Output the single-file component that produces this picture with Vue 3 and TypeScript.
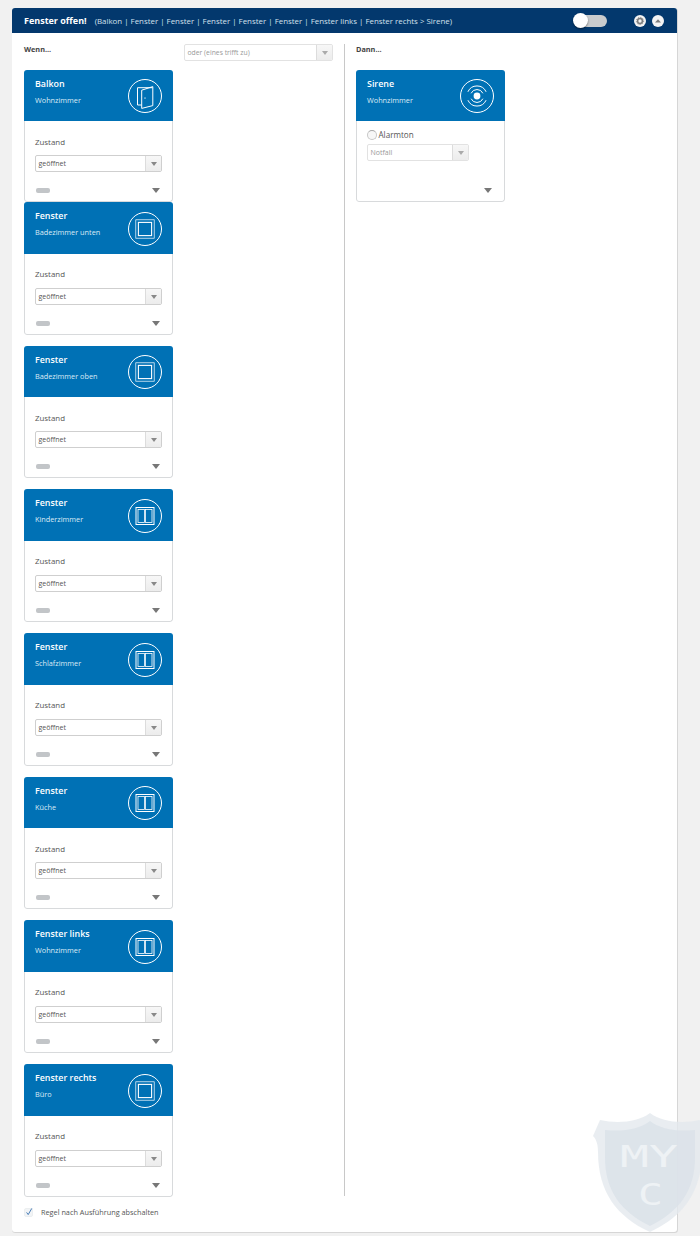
<script setup lang="ts">
type CardIcon = "door" | "single" | "double";

const conditions: { title: string; room: string; icon: CardIcon }[] = [
    { title: "Balkon", room: "Wohnzimmer", icon: "door" },
    { title: "Fenster", room: "Badezimmer unten", icon: "single" },
    { title: "Fenster", room: "Badezimmer oben", icon: "single" },
    { title: "Fenster", room: "Kinderzimmer", icon: "double" },
    { title: "Fenster", room: "Schlafzimmer", icon: "double" },
    { title: "Fenster", room: "Küche", icon: "double" },
    { title: "Fenster links", room: "Wohnzimmer", icon: "double" },
    { title: "Fenster rechts", room: "Büro", icon: "single" },
];
</script>

<template>
    <div class="page">
        <section class="panel">
            <header class="panel__head">
                <strong class="panel__title">Fenster offen!</strong>
                <span class="panel__summary">(Balkon | Fenster | Fenster | Fenster | Fenster | Fenster | Fenster links | Fenster rechts &gt; Sirene)</span>
                <span class="toggle"><span class="toggle__knob"></span></span>
                <span class="round-btn round-btn--gear">
                    <svg viewBox="0 0 12 12" width="12" height="12">
                        <circle cx="6" cy="6" r="6" fill="#f4f4f4" />
                        <circle cx="6" cy="6" r="2.4" fill="none" stroke="#7d7d7d" stroke-width="1.5" />
                        <circle cx="6" cy="6" r="3.6" fill="none" stroke="#7d7d7d" stroke-width="0.9" stroke-dasharray="1.2 1.2" />
                    </svg>
                </span>
                <span class="round-btn">
                    <svg viewBox="0 0 12 12" width="12" height="12">
                        <circle cx="6" cy="6" r="6" fill="#f4f4f4" />
                        <path d="M3 7.6 6 4.2l3 3.4z" fill="#7d7d7d" />
                    </svg>
                </span>
            </header>

            <div class="panel__body">
                <div class="rule">
                    <div class="rule__when">
                        <div class="rule__top">
                            <div class="rule__label">Wenn...</div>
                            <div class="select select--muted select--mode">
                                <span class="select__value">oder (eines trifft zu)</span>
                                <span class="select__arrow"></span>
                            </div>
                        </div>
                        <article v-for="(card, i) in conditions" :key="i" class="card" :class="{ 'card--tight': i === 0 }">
                            <div class="card__head">
                                <div class="card__names">
                                    <div class="card__title">{{ card.title }}</div>
                                    <div class="card__room">{{ card.room }}</div>
                                </div>
                                <svg class="card__icon" viewBox="0 0 36 36" width="36" height="36" fill="none" stroke="#fff">
                                    <circle cx="18" cy="18" r="16.5" stroke-width="1" />
                                    <template v-if="card.icon === 'door'">
                                        <path d="M14.5 27H10.5V9.7H25.5" stroke-width="1" />
                                        <path d="M14.7 12.2 25.8 8.6V27.6L14.7 30.4z" stroke-width="1" />
                                        <path d="M18 19.4v1.4" stroke-width="0.9" />
                                    </template>
                                    <template v-else-if="card.icon === 'single'">
                                        <rect x="8.8" y="8.8" width="18.4" height="18.4" stroke-width="0.7" />
                                        <rect x="11.4" y="11.4" width="13.2" height="13.2" stroke-width="1.1" />
                                    </template>
                                    <template v-else>
                                        <rect x="9" y="9.5" width="18" height="17" stroke-width="1" />
                                        <rect x="11" y="11.5" width="6.5" height="13" stroke-width="0.8" />
                                        <rect x="18.5" y="11.5" width="6.5" height="13" stroke-width="0.8" />
                                    </template>
                                </svg>
                            </div>
                            <div class="card__body">
                                <div class="card__field">Zustand</div>
                                <div class="select">
                                    <span class="select__value">geöffnet</span>
                                    <span class="select__arrow"></span>
                                </div>
                                <div class="card__foot">
                                    <span class="card__pill"></span>
                                    <span class="card__more"></span>
                                </div>
                            </div>
                        </article>
                    </div>

                    <div class="rule__then">
                        <div class="rule__label rule__label--then">Dann...</div>
                        <article class="card">
                            <div class="card__head">
                                <div class="card__names">
                                    <div class="card__title">Sirene</div>
                                    <div class="card__room">Wohnzimmer</div>
                                </div>
                                <svg class="card__icon" viewBox="0 0 36 36" width="36" height="36" fill="none" stroke="#fff">
                                    <circle cx="18" cy="18" r="16.5" stroke-width="1" />
                                    <circle cx="18" cy="18" r="3.4" fill="#fff" stroke="none" />
                                    <g stroke-width="1">
                                        <path d="M12.1 15.3a6.5 6.5 0 0 1 11.8 0M12.1 20.7a6.5 6.5 0 0 0 11.8 0" />
                                        <path d="M8.9 13.8a10 10 0 0 1 18.2 0M8.9 22.2a10 10 0 0 0 18.2 0" />
                                    </g>
                                </svg>
                            </div>
                            <div class="card__body card__body--action">
                                <label class="radio"><span class="radio__dot"></span>Alarmton</label>
                                <div class="select select--muted select--short">
                                    <span class="select__value">Notfall</span>
                                    <span class="select__arrow"></span>
                                </div>
                                <div class="card__foot card__foot--end">
                                    <span class="card__more"></span>
                                </div>
                            </div>
                        </article>
                    </div>
                </div>

                <label class="disable-after">
                    <svg class="disable-after__box" viewBox="0 0 10 10" width="10" height="10">
                        <rect x="0.5" y="1.5" width="8" height="8" rx="1.5" fill="#f2f4f6" stroke="#e4e7ea" stroke-width="0.6" />
                        <path d="M2.6 5.4 4.2 7.6 7.8 1.4" fill="none" stroke="#4b7fb8" stroke-width="1" />
                    </svg>
                    Regel nach Ausführung abschalten
                </label>
            </div>
        </section>

        <svg class="watermark" viewBox="0 0 108 122" width="108" height="122" aria-hidden="true">
            <path class="watermark__rim" d="M0 24 7 8C25 12 45 10 57 1 69 10 89 12 107 8L114 24C110 28 109 34 109 40 109 80 90 105 57 120 24 105 5 80 5 40 5 34 4 28 0 24z" />
            <path class="watermark__core" d="M12 18C30 20 47 17 57 9 67 17 84 20 102 18V45C102 80 85 100 57 114 29 100 12 80 12 45z" />
            <text x="27" y="55" textLength="58" lengthAdjust="spacingAndGlyphs" class="watermark__text">MY</text>
            <text x="45" y="93" textLength="25" lengthAdjust="spacingAndGlyphs" class="watermark__text">C</text>
        </svg>
    </div>
</template>

<style scoped>
.page {
    position: relative;
    height: 1236px;
    overflow: hidden;
    box-sizing: border-box;
    padding: 8px 23.5px 4px 12px;
    font-family: "Open Sans", "Liberation Sans", sans-serif;
    color: #555;
}

.panel {
    display: flex;
    flex-direction: column;
    height: 100%;
    box-sizing: border-box;
    border-radius: 3px;
    background: #fff;
    box-shadow: 0.5px 0.5px 0 0.5px #d6d6d6;
}

.panel__head {
    display: flex;
    flex: none;
    align-items: center;
    height: 25px;
    padding: 0 13px 0 12px;
    border-radius: 3px 3px 0 0;
    background: #03386d;
    color: #fff;
}

.panel__title {
    font-size: 9px;
    font-weight: 700;
    white-space: nowrap;
}

.panel__summary {
    margin-left: 8px;
    font-size: 7.9px;
    color: #d3e0ec;
    white-space: nowrap;
}

.toggle {
    position: relative;
    width: 33px;
    height: 12px;
    margin-left: auto;
    border-radius: 6px;
    background: #c9cbcd;
}

.toggle__knob {
    position: absolute;
    top: -1.5px;
    left: -1px;
    width: 15px;
    height: 15px;
    border-radius: 50%;
    background: #fff;
    box-shadow: 0 1px 2px rgba(0, 0, 0, 0.45);
}

.round-btn {
    display: flex;
    width: 12px;
    height: 12px;
    margin-left: 6px;
}

.round-btn--gear {
    margin-left: 27px;
}

.panel__body {
    display: flex;
    flex: 1;
    flex-direction: column;
    padding: 11px 12px 0;
}

.rule {
    display: flex;
}

.rule__when {
    box-sizing: border-box;
    width: 321px;
    height: 1152px;
    padding-right: 11px;
    border-right: 1px solid #c8c8c8;
}

.rule__top {
    display: flex;
    justify-content: space-between;
    height: 25.5px;
}

.rule__label {
    font-size: 7.3px;
    font-weight: 700;
    line-height: 11px;
    color: #444;
}

.rule__label--then {
    height: 25.5px;
}

.rule__then {
    padding-left: 11px;
}

.card {
    display: flex;
    flex-direction: column;
    box-sizing: border-box;
    width: 149px;
    height: 132.5px;
    margin-bottom: 11.2px;
    overflow: hidden;
    border-radius: 3px;
    background: #fff;
}

.card--tight {
    margin-bottom: 0;
}

.card__head {
    display: flex;
    flex: none;
    justify-content: space-between;
    height: 51.5px;
    box-sizing: border-box;
    padding: 8px 10px 0 11px;
    background: #0071b5;
    color: #fff;
}

.card__title {
    font-size: 8.9px;
    font-weight: 600;
    line-height: 12px;
}

.card__room {
    margin-top: 5px;
    font-size: 7.3px;
    line-height: 11px;
    color: #dcebf5;
}

.card__icon {
    margin-top: 0.5px;
}

.card__body {
    display: flex;
    flex: 1;
    flex-direction: column;
    padding: 14.5px 10px 0;
    border: 1px solid #d8dadc;
    border-top: 0;
    border-radius: 0 0 3px 3px;
}

.card__body--action {
    padding-top: 8px;
}

.card__field {
    font-size: 7.9px;
    line-height: 12px;
    color: #555;
}

.card__field + .select {
    margin-top: 7.5px;
}

.card__foot {
    display: flex;
    align-items: center;
    justify-content: space-between;
    height: 5px;
    margin-top: 16px;
    padding: 0 2px 0 1px;
}

.card__foot--end {
    justify-content: flex-end;
    margin-top: 27px;
}

.card__pill {
    width: 14px;
    height: 5px;
    border-radius: 2px;
    background: #c2c5c8;
}

.card__more {
    width: 0;
    height: 0;
    border-top: 5.5px solid #777;
    border-right: 4.5px solid transparent;
    border-left: 4.5px solid transparent;
}

.select {
    display: flex;
    align-items: stretch;
    box-sizing: border-box;
    height: 17px;
    overflow: hidden;
    border: 1px solid #cfcfcf;
    border-radius: 2px;
    background: #fff;
}

.select--muted {
    border-color: #e2e2e2;
}

.select--mode {
    width: 149px;
}

.select--short {
    width: 102px;
    margin-top: 4px;
}

.select__value {
    flex: 1;
    padding-left: 2.5px;
    font-size: 7px;
    line-height: 15.5px;
    color: #555;
}

.select--muted .select__value {
    color: #999;
}

.select--mode .select__value {
    font-size: 6.8px;
}

.select__arrow {
    position: relative;
    flex: none;
    width: 15px;
    border-left: 1px solid #dcdcdc;
    background: linear-gradient(#f7f7f7, #ececec);
}

.select__arrow::after {
    content: "";
    position: absolute;
    top: 6px;
    left: 4.5px;
    width: 0;
    height: 0;
    border-top: 4px solid #888;
    border-right: 3px solid transparent;
    border-left: 3px solid transparent;
}

.select--muted .select__arrow::after {
    border-top-color: #aaa;
}

.radio {
    display: flex;
    align-items: center;
    height: 11px;
    font-size: 8.1px;
    color: #555;
}

.radio__dot {
    box-sizing: border-box;
    width: 10px;
    height: 10px;
    margin: 1px 1.5px 0 0;
    border: 1px solid #c7c7c7;
    border-top-color: #a9a9a9;
    border-radius: 50%;
    background: #f7f7f7;
}

.disable-after {
    display: flex;
    align-items: center;
    margin-top: 10px;
    font-size: 7.3px;
    line-height: 12px;
    color: #555;
}

.disable-after__box {
    margin-right: 7px;
}

.watermark {
    position: absolute;
    top: 1112px;
    left: 593px;
}

.watermark__rim {
    fill: #e4e9ee;
    opacity: 0.8;
}

.watermark__core {
    fill: #dbe2e9;
    opacity: 0.85;
}

.watermark__text {
    font-family: "DejaVu Sans Mono", monospace;
    font-size: 31px;
    fill: #eef2f5;
}
</style>

<style>
html,
body {
    margin: 0;
    background: #f1f1f1;
}
</style>
